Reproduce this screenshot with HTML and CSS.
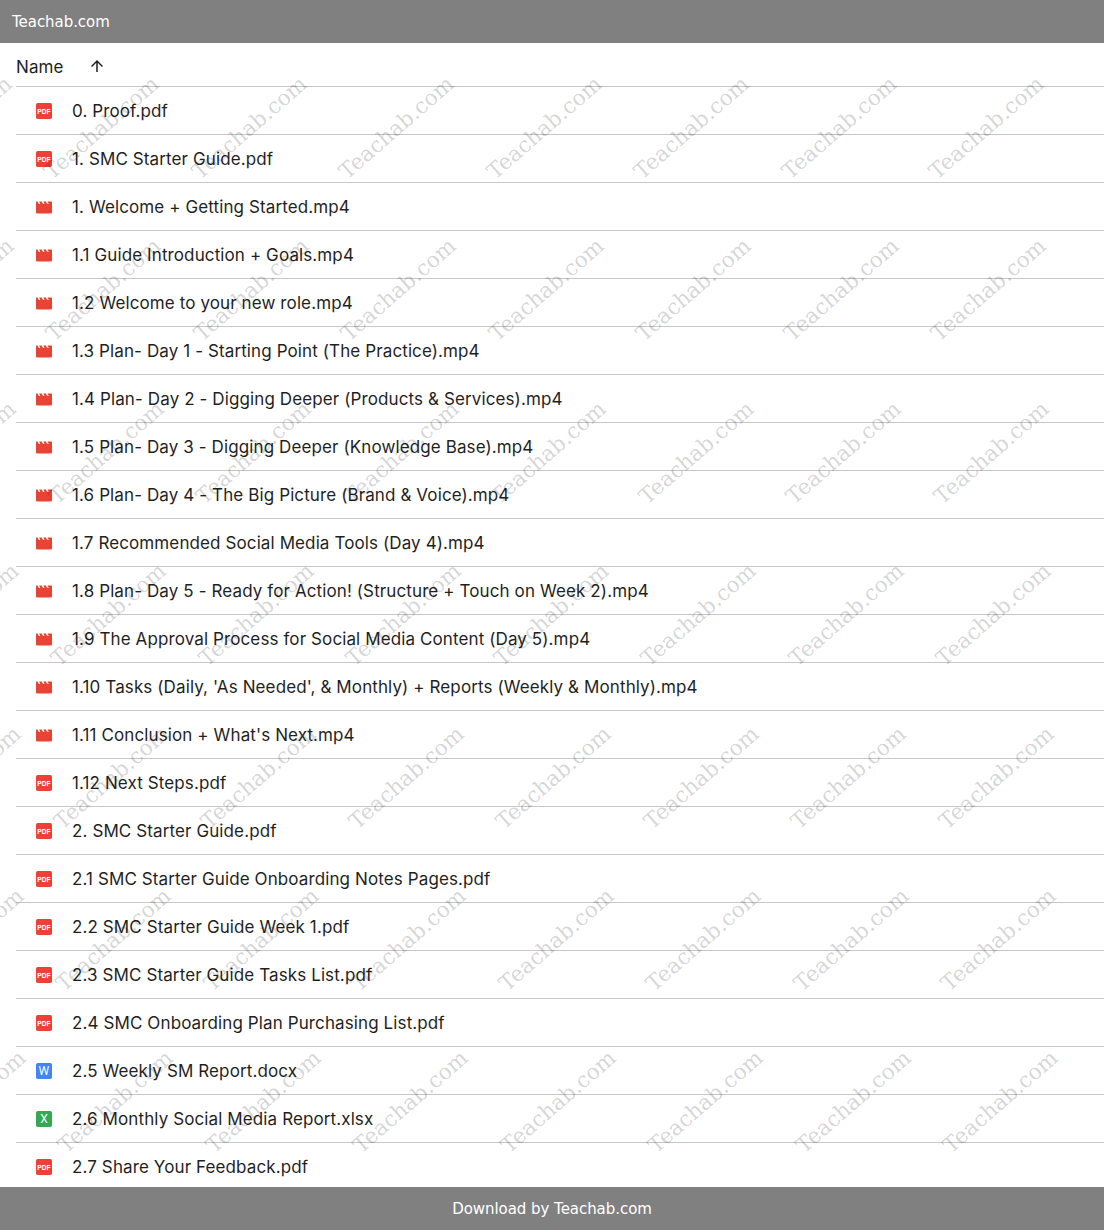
FILE: index.html
```html
<!DOCTYPE html>
<html lang="en">
<head>
  <meta charset="UTF-8" />
  <title>Teachab.com</title>
  <link rel="stylesheet" href="styles.css">
</head>
<body class="app-container">
  <svg class="defs" width="0" height="0">
    <symbol id="ic-pdf" viewBox="0 0 16 16">
      <rect width="16" height="16" rx="1.8" fill="#ea4335"/>
      <text x="8" y="10.5" text-anchor="middle" class="ic-small">PDF</text>
    </symbol>
    <symbol id="ic-video" viewBox="0 0 16 16">
      <path d="M0 2.5h1.6l1.2 2.4h1.6L3.2 2.5h2.6l1.2 2.4h1.6L7.4 2.5H10l1.2 2.4h1.6l-1.2-2.4H16V13.2a1.2 1.2 0 0 1-1.2 1.2H1.2A1.2 1.2 0 0 1 0 13.2z" fill="#ea4335"/>
    </symbol>
    <symbol id="ic-doc" viewBox="0 0 16 16">
      <rect width="16" height="16" rx="1.8" fill="#4285f4"/>
      <text x="8" y="12.3" text-anchor="middle" class="ic-letter">W</text>
    </symbol>
    <symbol id="ic-xls" viewBox="0 0 16 16">
      <rect width="16" height="16" rx="1.8" fill="#34a853"/>
      <text x="8" y="12.3" text-anchor="middle" class="ic-letter">X</text>
    </symbol>
  </svg>

  <header class="top-bar">Teachab.com</header>

  <main class="file-list">
    <div class="list-head">
      <span>Name</span>
      <svg class="sort-arrow" width="18" height="18" viewBox="0 0 24 24"><path d="M4 12l1.41 1.41L11 7.83V20h2V7.83l5.58 5.59L20 12l-8-8-8 8z" fill="#1f1f1f"/></svg>
    </div>
    <div class="file-row"><svg class="file-icon"><use href="#ic-pdf"/></svg><span>0. Proof.pdf</span></div>
    <div class="file-row"><svg class="file-icon"><use href="#ic-pdf"/></svg><span>1. SMC Starter Guide.pdf</span></div>
    <div class="file-row"><svg class="file-icon"><use href="#ic-video"/></svg><span>1. Welcome + Getting Started.mp4</span></div>
    <div class="file-row"><svg class="file-icon"><use href="#ic-video"/></svg><span>1.1 Guide Introduction + Goals.mp4</span></div>
    <div class="file-row"><svg class="file-icon"><use href="#ic-video"/></svg><span>1.2 Welcome to your new role.mp4</span></div>
    <div class="file-row"><svg class="file-icon"><use href="#ic-video"/></svg><span>1.3 Plan- Day 1 - Starting Point (The Practice).mp4</span></div>
    <div class="file-row"><svg class="file-icon"><use href="#ic-video"/></svg><span>1.4 Plan- Day 2 - Digging Deeper (Products &amp; Services).mp4</span></div>
    <div class="file-row"><svg class="file-icon"><use href="#ic-video"/></svg><span>1.5 Plan- Day 3 - Digging Deeper (Knowledge Base).mp4</span></div>
    <div class="file-row"><svg class="file-icon"><use href="#ic-video"/></svg><span>1.6 Plan- Day 4 - The Big Picture (Brand &amp; Voice).mp4</span></div>
    <div class="file-row"><svg class="file-icon"><use href="#ic-video"/></svg><span>1.7 Recommended Social Media Tools (Day 4).mp4</span></div>
    <div class="file-row"><svg class="file-icon"><use href="#ic-video"/></svg><span>1.8 Plan- Day 5 - Ready for Action! (Structure + Touch on Week 2).mp4</span></div>
    <div class="file-row"><svg class="file-icon"><use href="#ic-video"/></svg><span>1.9 The Approval Process for Social Media Content (Day 5).mp4</span></div>
    <div class="file-row"><svg class="file-icon"><use href="#ic-video"/></svg><span>1.10 Tasks (Daily, 'As Needed', &amp; Monthly) + Reports (Weekly &amp; Monthly).mp4</span></div>
    <div class="file-row"><svg class="file-icon"><use href="#ic-video"/></svg><span>1.11 Conclusion + What's Next.mp4</span></div>
    <div class="file-row"><svg class="file-icon"><use href="#ic-pdf"/></svg><span>1.12 Next Steps.pdf</span></div>
    <div class="file-row"><svg class="file-icon"><use href="#ic-pdf"/></svg><span>2. SMC Starter Guide.pdf</span></div>
    <div class="file-row"><svg class="file-icon"><use href="#ic-pdf"/></svg><span>2.1 SMC Starter Guide Onboarding Notes Pages.pdf</span></div>
    <div class="file-row"><svg class="file-icon"><use href="#ic-pdf"/></svg><span>2.2 SMC Starter Guide Week 1.pdf</span></div>
    <div class="file-row"><svg class="file-icon"><use href="#ic-pdf"/></svg><span>2.3 SMC Starter Guide Tasks List.pdf</span></div>
    <div class="file-row"><svg class="file-icon"><use href="#ic-pdf"/></svg><span>2.4 SMC Onboarding Plan Purchasing List.pdf</span></div>
    <div class="file-row"><svg class="file-icon"><use href="#ic-doc"/></svg><span>2.5 Weekly SM Report.docx</span></div>
    <div class="file-row"><svg class="file-icon"><use href="#ic-xls"/></svg><span>2.6 Monthly Social Media Report.xlsx</span></div>
    <div class="file-row"><svg class="file-icon"><use href="#ic-pdf"/></svg><span>2.7 Share Your Feedback.pdf</span></div>
  </main>

  <footer class="bottom-bar">Download by Teachab.com</footer>

  <!-- watermark over the list -->
  <div class="watermark" aria-hidden="true">
    <div class="wm-row"><span>Teachab.com</span><span>Teachab.com</span><span>Teachab.com</span><span>Teachab.com</span><span>Teachab.com</span><span>Teachab.com</span><span>Teachab.com</span><span>Teachab.com</span><span>Teachab.com</span></div>
    <div class="wm-row"><span>Teachab.com</span><span>Teachab.com</span><span>Teachab.com</span><span>Teachab.com</span><span>Teachab.com</span><span>Teachab.com</span><span>Teachab.com</span><span>Teachab.com</span><span>Teachab.com</span></div>
    <div class="wm-row"><span>Teachab.com</span><span>Teachab.com</span><span>Teachab.com</span><span>Teachab.com</span><span>Teachab.com</span><span>Teachab.com</span><span>Teachab.com</span><span>Teachab.com</span><span>Teachab.com</span></div>
    <div class="wm-row"><span>Teachab.com</span><span>Teachab.com</span><span>Teachab.com</span><span>Teachab.com</span><span>Teachab.com</span><span>Teachab.com</span><span>Teachab.com</span><span>Teachab.com</span><span>Teachab.com</span></div>
    <div class="wm-row"><span>Teachab.com</span><span>Teachab.com</span><span>Teachab.com</span><span>Teachab.com</span><span>Teachab.com</span><span>Teachab.com</span><span>Teachab.com</span><span>Teachab.com</span><span>Teachab.com</span></div>
    <div class="wm-row"><span>Teachab.com</span><span>Teachab.com</span><span>Teachab.com</span><span>Teachab.com</span><span>Teachab.com</span><span>Teachab.com</span><span>Teachab.com</span><span>Teachab.com</span><span>Teachab.com</span></div>
    <div class="wm-row"><span>Teachab.com</span><span>Teachab.com</span><span>Teachab.com</span><span>Teachab.com</span><span>Teachab.com</span><span>Teachab.com</span><span>Teachab.com</span><span>Teachab.com</span><span>Teachab.com</span></div>
  </div>
</body>
</html>
```
FILE: styles.css
```css
* { box-sizing: border-box; }
html, body { height: 100%; }
body {
  margin: 0;
  background: #fff;
  color: #1f1f1f;
  font-family: Inter, Roboto, sans-serif;
  font-size: 17px;
  letter-spacing: 0.11px;
  overflow: hidden;
}
.app-container {
  display: grid;
  grid-template-rows: 43px 1fr 43px;
  height: 100vh;
  position: relative;
}
.defs { position: absolute; }

.top-bar, .bottom-bar {
  background: #808080;
  color: #fff;
  font-family: "DejaVu Sans", sans-serif;
  font-size: 15px;
  letter-spacing: -0.05px;
  display: flex;
  align-items: center;
}
.top-bar { padding-left: 12px; }
.bottom-bar { justify-content: center; }

.file-list { overflow: hidden; }
.list-head {
  height: 44px;
  margin-left: 16px;
  padding-top: 4px;
  display: flex;
  align-items: center;
  border-bottom: 1px solid #c7c7c7;
}
.sort-arrow { margin-left: 24px; margin-top: -2px; }
.file-row {
  height: 48px;
  margin-left: 16px;
  padding-left: 20px;
  display: flex;
  align-items: center;
  border-bottom: 1px solid #c7c7c7;
}
.file-icon {
  width: 16px;
  height: 16px;
  margin-right: 20px;
  flex: none;
}
.ic-small {
  font: 700 6.6px "Liberation Sans", sans-serif;
  fill: #fff;
}
.ic-letter {
  font: 400 12px Roboto, sans-serif;
  fill: #fff;
}

.watermark {
  position: absolute;
  left: 0;
  top: 0;
  width: 100%;
  height: 100%;
  overflow: hidden;
  pointer-events: none;
}
.wm-row {
  display: flex;
  height: 162.4px;
}
.wm-row:first-child { margin-top: 126px; margin-left: -149px; }
.wm-row:nth-child(2) { margin-left: -146.6px; }
.wm-row:nth-child(3) { margin-left: -144.2px; }
.wm-row:nth-child(4) { margin-left: -141.8px; }
.wm-row:nth-child(5) { margin-left: -139.4px; }
.wm-row:nth-child(6) { margin-left: -137px; }
.wm-row:nth-child(7) { margin-left: -134.6px; }
.wm-row span {
  flex: none;
  width: 147.5px;
  font-family: "DejaVu Serif", serif;
  font-size: 21.6px;
  line-height: 24px;
  letter-spacing: 0;
  white-space: nowrap;
  color: rgba(0, 0, 0, 0.18);
  transform: rotate(-41deg);
  transform-origin: 0 100%;
}
```
